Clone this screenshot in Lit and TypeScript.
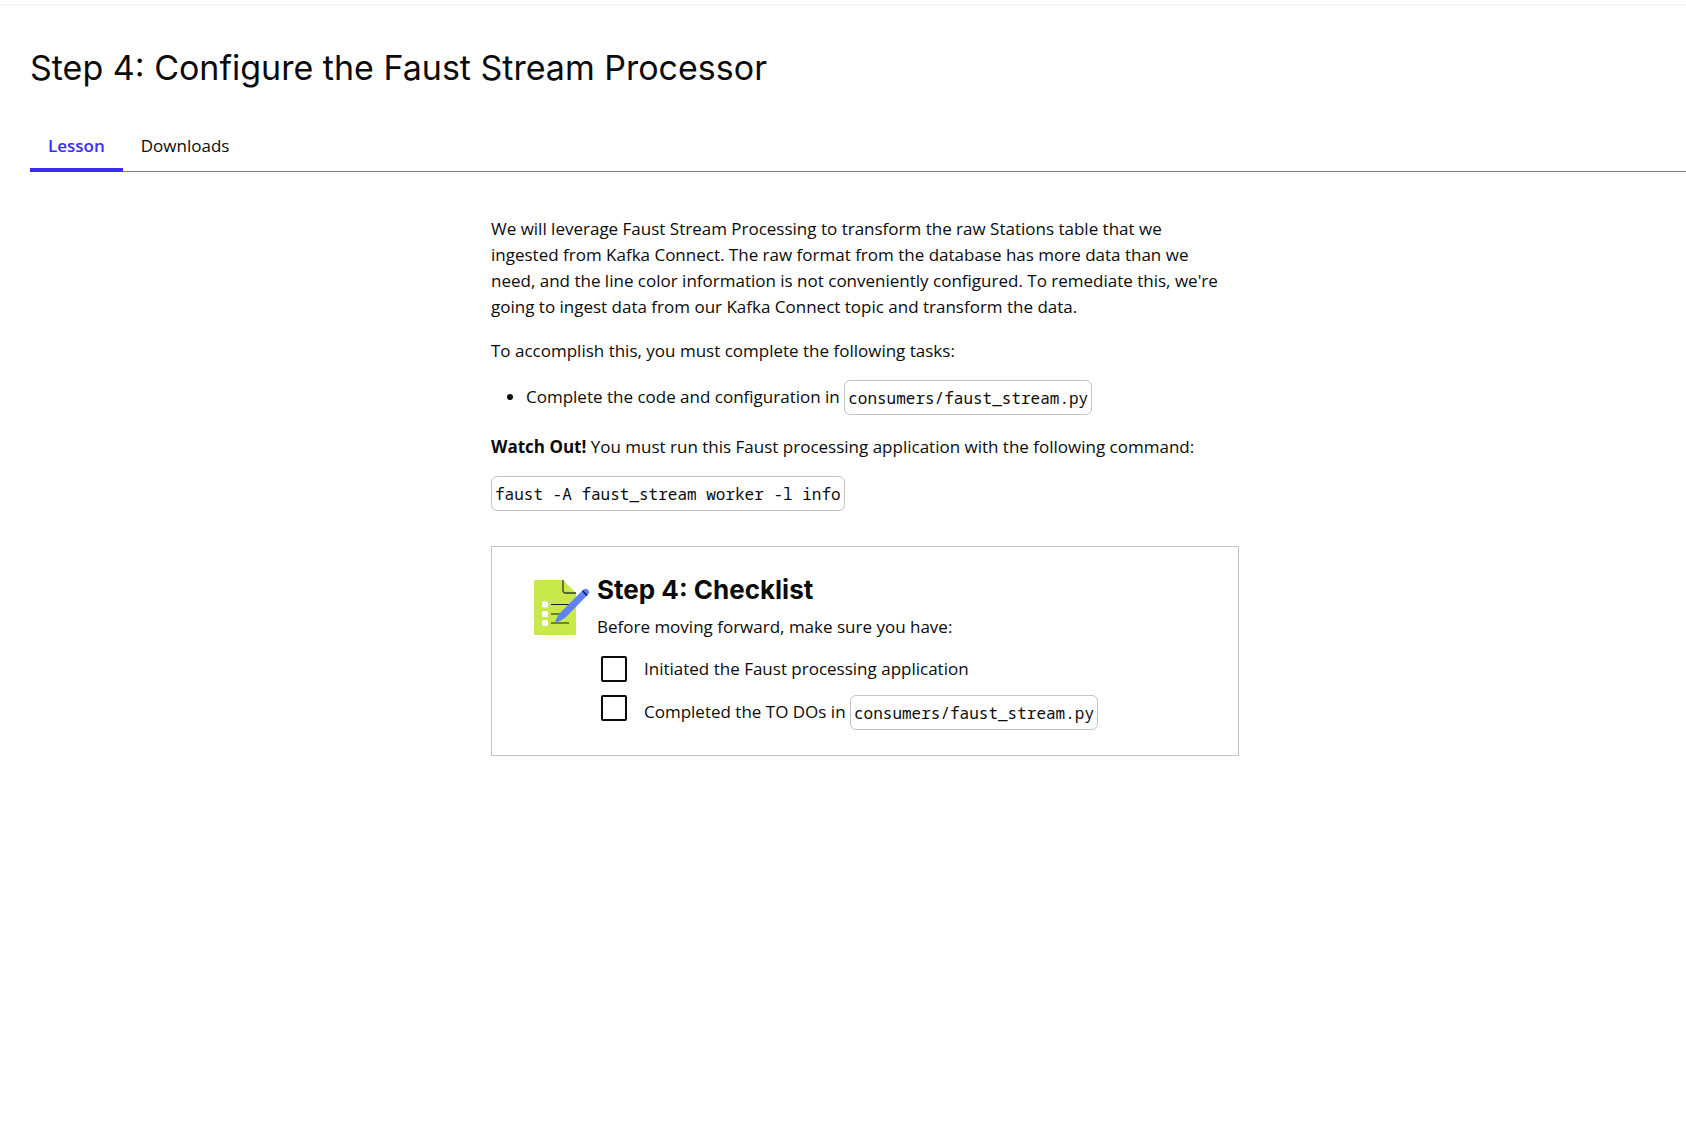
import { LitElement, html, css, svg } from "lit";
import { customElement, state } from "lit/decorators.js";

const notepadIcon = svg`
  <path d="M1.500 0H29L42 13V53.500a1.500 1.500 0 0 1-1.500 1.500H1.500A1.500 1.500 0 0 1 0 53.500V1.500A1.500 1.500 0 0 1 1.500 0Z" fill="#c8e84b"/>
  <path d="M29 0V10.500a2.500 2.500 0 0 0 2.500 2.500H42" fill="none" stroke="#17201a" stroke-opacity=".85" stroke-width="1.300"/>
  <g fill="#fff">
    <rect x="8" y="21.500" width="6" height="6" rx="1.500"/>
    <rect x="8" y="31" width="6" height="6" rx="1.500"/>
    <rect x="8" y="40" width="6" height="6" rx="1.500"/>
  </g>
  <path d="M17 24.500H35M17 34H30M17 43H35" fill="none" stroke="#17201a" stroke-width="1.200"/>
  <path d="M49.200 9.800a3.200 3.200 0 0 1 4.800 0a3.200 3.200 0 0 1 0 4.800L32 37Q28 40.500 22.500 42.400Q20.800 42.500 21.500 40.800Q23.200 36 26.500 32.400Z" fill="#5f82f5"/>
  <path d="M48.500 10.700L53.200 15.400" fill="none" stroke="#10163a" stroke-width="1.400"/>
`;

@customElement("app-root")
export class AppRoot extends LitElement {
  @state() private tab = "Lesson";

  static styles = css`
    :host {
      display: block;
      color: #0b0b0b;
      background: #fff;
      font: 17px/26px "Open Sans", "Noto Sans", sans-serif;
    }
    .top {
      height: 2px;
      margin-top: 4px;
      background: #f6f6f6;
    }
    .page {
      padding-left: 30px;
    }
    .title {
      margin: 0;
      padding: 40px 0 36px;
      font: 400 34px/44px Inter, "Liberation Sans", sans-serif;
    }
    .tabs {
      display: flex;
      box-shadow: inset 0 -1px #808080;
    }
    .tab {
      padding: 7px 18px 9px;
      border: 0;
      border-bottom: 4px solid transparent;
      background: none;
      color: inherit;
      font: inherit;
      cursor: pointer;
    }
    .tab.active {
      color: #3a2bf5;
      border-color: #3a2bf5;
      font-weight: 600;
    }
    .lesson {
      max-width: 748px;
      margin: 0 auto;
      padding: 44px 0 35px 14px;
    }
    .text {
      margin: 0 0 18px;
      padding-right: 14px;
    }
    .list {
      margin: -2px 0 19px;
      padding-left: 35px;
    }
    .code {
      display: inline-block;
      padding: 4px 3px 3px;
      border: 1px solid #c4c4c4;
      border-radius: 6px;
      font: 16px/26px "Noto Sans Mono", "Liberation Mono", monospace;
      vertical-align: -1px;
    }
    .command {
      display: flex;
      margin: -2px 0 35px;
    }
    .card {
      display: flex;
      gap: 8px;
      padding: 26px 42px 25px;
      border: 1px solid #c4c4c4;
    }
    .icon {
      flex: none;
      width: 55px;
      height: 55px;
      margin-top: 7px;
    }
    .card-title {
      margin: 0 0 7px;
      font: 700 26px/34px Inter, "Liberation Sans", sans-serif;
    }
    .card-text {
      margin: 0 0 16px;
    }
    .checks {
      display: grid;
      gap: 4px;
      padding-left: 4px;
    }
    .check {
      display: flex;
      gap: 17px;
      align-items: flex-start;
      min-height: 35px;
    }
    .box {
      appearance: none;
      flex: none;
      width: 26px;
      height: 26px;
      margin: 0;
      border: 2px solid #0b0b0b;
      border-radius: 2px;
    }
    .box:checked {
      background: #3a2bf5;
    }
  `;

  private tabButton(name: string) {
    const active = this.tab === name;
    return html`<button
      class="tab ${active ? "active" : ""}"
      role="tab"
      aria-selected=${active ? "true" : "false"}
      @click=${() => (this.tab = name)}
    >${name}</button>`;
  }

  render() {
    return html`
      <div class="top"></div>
      <main class="page">
        <h1 class="title">Step 4: Configure the Faust Stream Processor</h1>
        <div class="tabs" role="tablist">${["Lesson", "Downloads"].map((t) => this.tabButton(t))}</div>
        <article class="lesson">
          <p class="text">We will leverage Faust Stream Processing to transform the raw Stations table that we ingested from Kafka Connect. The raw format from the database has more data than we need, and the line color information is not conveniently configured. To remediate this, we're going to ingest data from our Kafka Connect topic and transform the data.</p>
          <p class="text">To accomplish this, you must complete the following tasks:</p>
          <ul class="list">
            <li>Complete the code and configuration in <code class="code">consumers/faust_stream.py</code></li>
          </ul>
          <p class="text"><strong>Watch Out!</strong> You must run this Faust processing application with the following command:</p>
          <div class="command"><code class="code">faust -A faust_stream worker -l info</code></div>
          <section class="card">
            <svg class="icon" viewBox="0 0 55 55" aria-hidden="true">${notepadIcon}</svg>
            <div>
              <h2 class="card-title">Step 4: Checklist</h2>
              <p class="card-text">Before moving forward, make sure you have:</p>
              <div class="checks">
                <div class="check">
                  <input class="box" type="checkbox" id="initiated" />
                  <label for="initiated">Initiated the Faust processing application</label>
                </div>
                <div class="check">
                  <input class="box" type="checkbox" id="completed" />
                  <label for="completed">Completed the TO DOs in <code class="code">consumers/faust_stream.py</code></label>
                </div>
              </div>
            </div>
          </section>
        </article>
      </main>
    `;
  }
}
